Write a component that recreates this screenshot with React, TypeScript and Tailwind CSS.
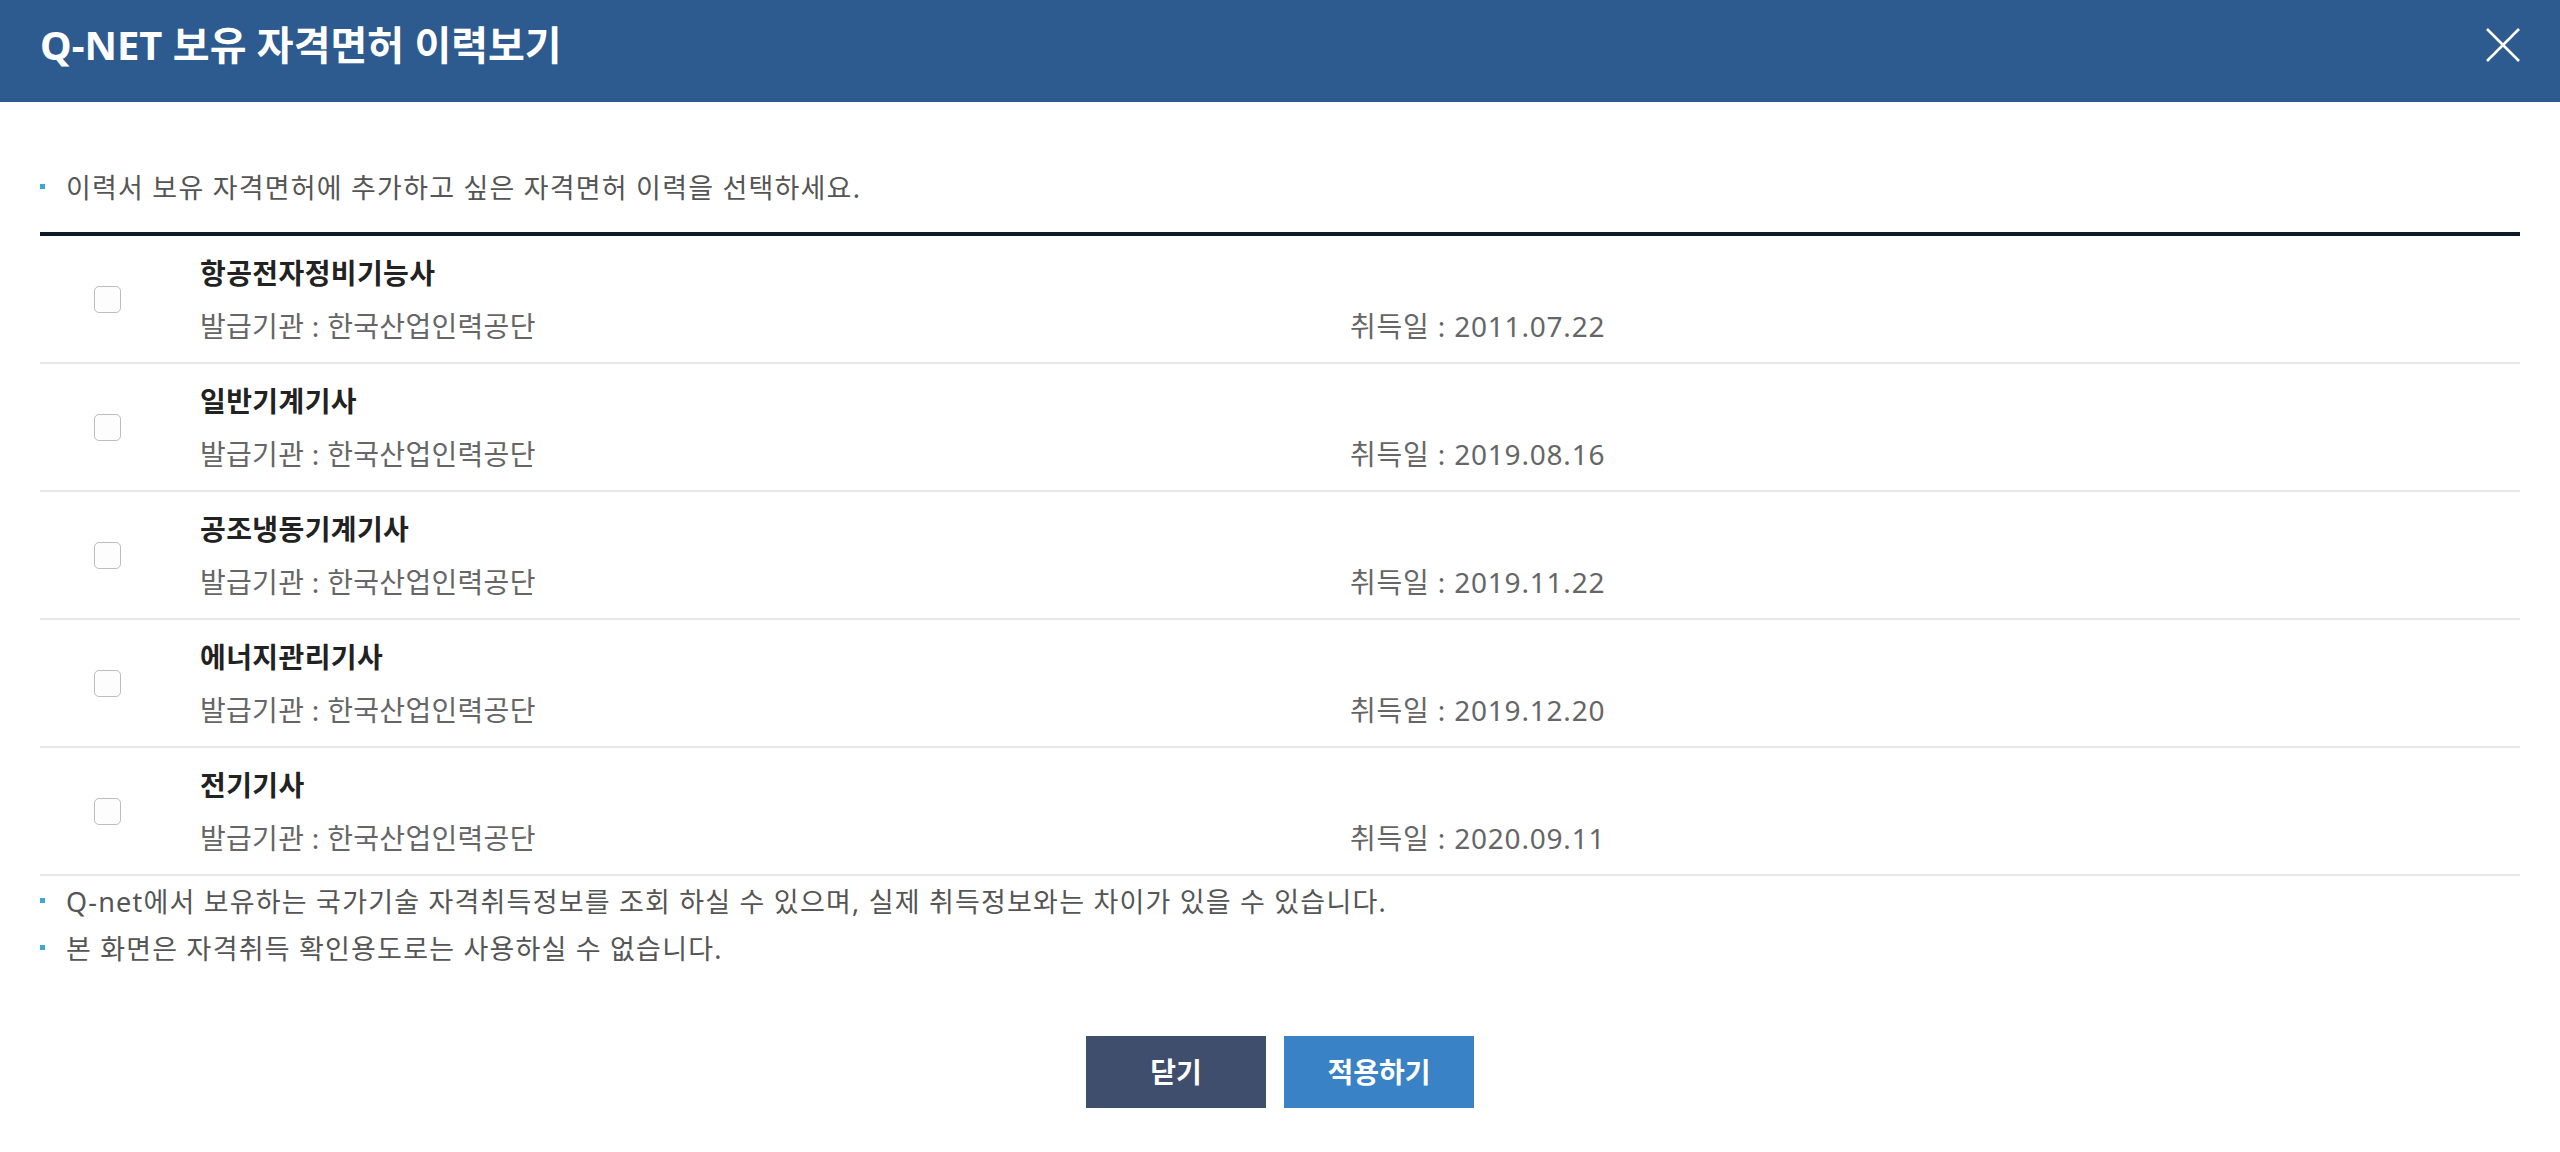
import { useState } from "react";

const licenses = [
  { id: 1, name: "항공전자정비기능사", issuer: "한국산업인력공단", date: "2011.07.22" },
  { id: 2, name: "일반기계기사", issuer: "한국산업인력공단", date: "2019.08.16" },
  { id: 3, name: "공조냉동기계기사", issuer: "한국산업인력공단", date: "2019.11.22" },
  { id: 4, name: "에너지관리기사", issuer: "한국산업인력공단", date: "2019.12.20" },
  { id: 5, name: "전기기사", issuer: "한국산업인력공단", date: "2020.09.11" },
];

function Bullet({ children }: { children: React.ReactNode }) {
  return (
    <p className="flex items-center text-[27px] leading-[39px] tracking-[1.2px] text-[#555]">
      <span className="w-[5px] h-[5px] bg-[#3ba8d6] mb-[3px] mr-[21px] shrink-0" />
      {children}
    </p>
  );
}

export default function App() {
  const [checked, setChecked] = useState<number[]>([]);

  const toggle = (id: number) => {
    setChecked((prev) =>
      prev.includes(id) ? prev.filter((x) => x !== id) : [...prev, id],
    );
  };

  return (
    <div
      className="w-full min-h-[1152px] bg-white"
      style={{ fontFamily: '"Noto Sans", "Noto Sans CJK KR", sans-serif' }}
    >
      {/* Header */}
      <div className="h-[102px] bg-[#2d5a8f] flex items-center justify-between px-10 pb-[12px]">
        <h1 className="text-[40px] font-bold text-white leading-none">
          Q-NET 보유 자격면허 이력보기
        </h1>
        <button type="button" aria-label="닫기" className="w-[34px] h-[34px]">
          <svg width="34" height="34" viewBox="0 0 34 34" fill="none">
            <path d="M1 1L33 33M33 1L1 33" stroke="white" strokeWidth="2.6" />
          </svg>
        </button>
      </div>

      <div className="px-10 pt-[66px]">
        <Bullet>이력서 보유 자격면허에 추가하고 싶은 자격면허 이력을 선택하세요.</Bullet>

        {/* License list */}
        <ul className="mt-[25px] border-t-4 border-[#0d1a2b]">
          {licenses.map((item) => (
            <li
              key={item.id}
              className="h-[128px] flex items-center border-b-2 border-[#e6e6eb]"
            >
              <input
                type="checkbox"
                checked={checked.includes(item.id)}
                onChange={() => toggle(item.id)}
                className="appearance-none ml-[54px] w-[27px] h-[27px] rounded-[5px] border border-[#bdbdbd] bg-[#fdfdfd] shrink-0 checked:bg-[#3882c5]"
              />
              <div className="ml-[79px] flex flex-col self-start pt-[18px]">
                <p className="text-[28px] leading-[39px] font-bold tracking-[0.4px] text-[#222]">
                  {item.name}
                </p>
                <div className="mt-[14px] flex text-[28px] leading-[39px] tracking-[0.3px] text-[#666]">
                  <span className="w-[1150px]">발급기관 : {item.issuer}</span>
                  <span className="tracking-[0.8px]">취득일 : {item.date}</span>
                </div>
              </div>
            </li>
          ))}
        </ul>

        <div className="mt-[6px] flex flex-col gap-[8px]">
          <Bullet>
            Q-net에서 보유하는 국가기술 자격취득정보를 조회 하실 수 있으며, 실제
            취득정보와는 차이가 있을 수 있습니다.
          </Bullet>
          <Bullet>본 화면은 자격취득 확인용도로는 사용하실 수 없습니다.</Bullet>
        </div>

        {/* Buttons */}
        <div className="mt-[68px] flex justify-center gap-[18px]">
          <button
            type="button"
            className="w-[180px] h-[72px] bg-[#3f4e6d] text-white text-[28px] font-bold"
          >
            닫기
          </button>
          <button
            type="button"
            className="w-[190px] h-[72px] bg-[#3882c5] text-white text-[28px] font-bold"
          >
            적용하기
          </button>
        </div>
      </div>
    </div>
  );
}
